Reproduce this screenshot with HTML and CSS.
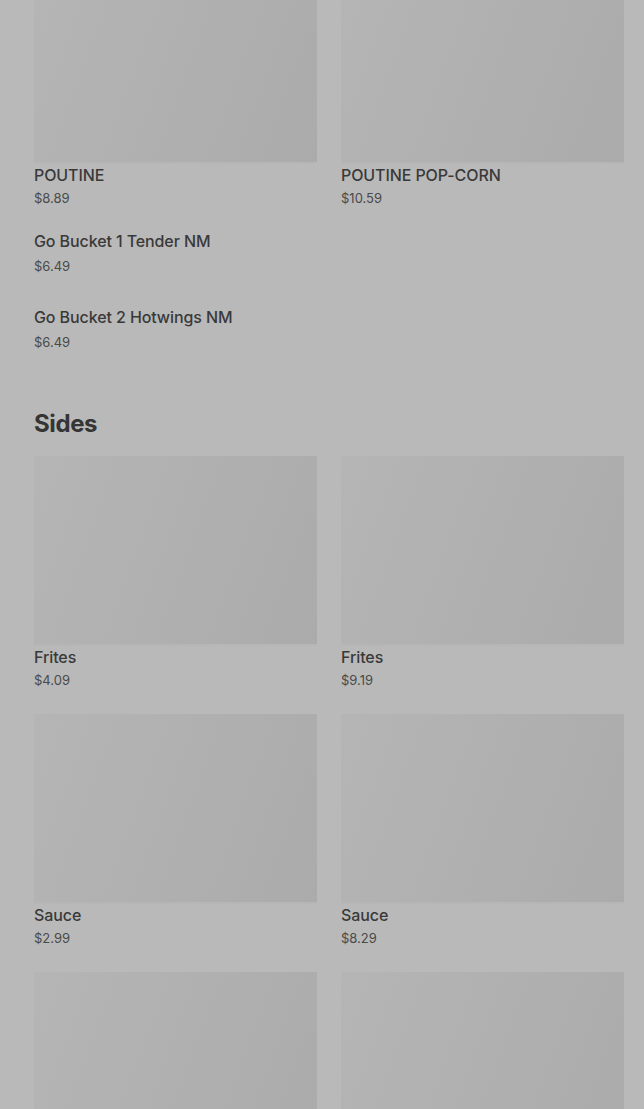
FILE: index.html
```html
<!DOCTYPE html>
<html lang="en">
<head>
    <meta charset="UTF-8">
    <meta name="viewport" content="width=device-width, initial-scale=1.0">
    <title>Menu</title>
    <link rel="stylesheet" href="styles.css">
</head>
<body>
    <div class="menu">
        <section class="section first">
            <div class="grid">
                <div class="card">
                    <div class="thumb"></div>
                    <div class="name">POUTINE</div>
                    <div class="price">$8.89</div>
                </div>
                <div class="card">
                    <div class="thumb"></div>
                    <div class="name">POUTINE POP-CORN</div>
                    <div class="price">$10.59</div>
                </div>
            </div>
            <div class="list">
                <div class="item">
                    <div class="name">Go Bucket 1 Tender NM</div>
                    <div class="price">$6.49</div>
                </div>
                <div class="item">
                    <div class="name">Go Bucket 2 Hotwings NM</div>
                    <div class="price">$6.49</div>
                </div>
            </div>
        </section>

        <section class="section">
            <h2>Sides</h2>
            <div class="grid">
                <div class="card">
                    <div class="thumb"></div>
                    <div class="name">Frites</div>
                    <div class="price">$4.09</div>
                </div>
                <div class="card">
                    <div class="thumb"></div>
                    <div class="name">Frites</div>
                    <div class="price">$9.19</div>
                </div>
                <div class="card">
                    <div class="thumb"></div>
                    <div class="name">Sauce</div>
                    <div class="price">$2.99</div>
                </div>
                <div class="card">
                    <div class="thumb"></div>
                    <div class="name">Sauce</div>
                    <div class="price">$8.29</div>
                </div>
                <div class="card">
                    <div class="thumb"></div>
                </div>
                <div class="card">
                    <div class="thumb"></div>
                </div>
            </div>
        </section>
    </div>
</body>
</html>
```

FILE: styles.css
```css
body {
    margin: 0;
    background: #b9b9b9;
    font-family: Inter, "Noto Sans", Arial, sans-serif;
    color: #383838;
    overflow: hidden;
}
.menu {
    padding: 0 20px 0 34px;
}
.section.first {
    margin-top: -26px;
}
.grid {
    display: grid;
    grid-template-columns: 1fr 1fr;
    column-gap: 24px;
    row-gap: 24px;
}
.thumb {
    height: 188px;
    background: linear-gradient(110deg, #b5b5b5 0%, #b0b0b0 50%, #ababab 100%);
    border-bottom: 2px solid #b6b6b6;
    margin-bottom: 1px;
}
.name {
    font-size: 16px;
    font-weight: 500;
    line-height: 20px;
    letter-spacing: -0.1px;
    color: #393939;
}
.price {
    margin-top: 3px;
    font-size: 13px;
    line-height: 20px;
    color: #4a4a4a;
}
.list {
    margin-top: 23px;
    display: flex;
    flex-direction: column;
    gap: 31px;
}
.list .price {
    margin-top: 5px;
}
h2 {
    margin: 56px 0 16px;
    font-size: 24px;
    line-height: 32px;
    font-weight: 700;
    letter-spacing: -0.4px;
    color: #353535;
}
```
